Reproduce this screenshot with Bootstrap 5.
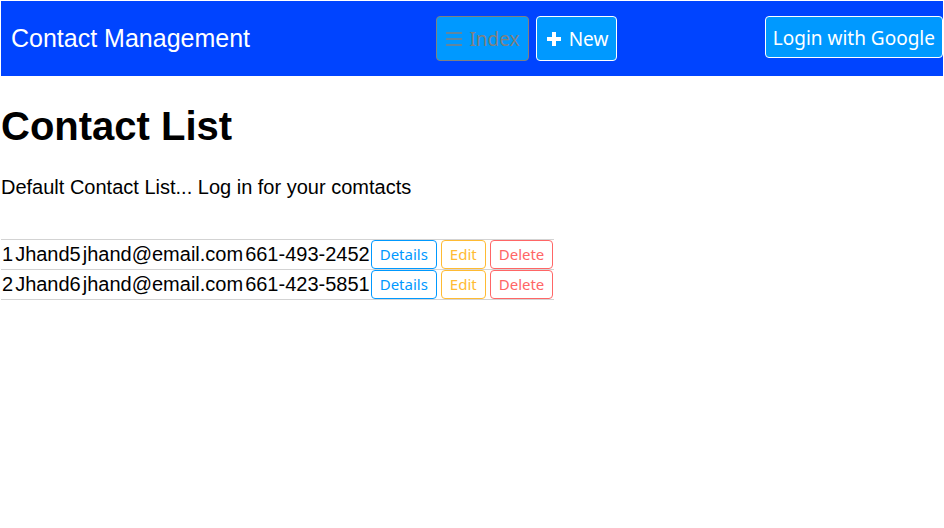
<!DOCTYPE html>
<html lang="en">
<head>
<meta charset="utf-8">
<meta name="viewport" content="width=device-width, initial-scale=1">
<title>Contact Management</title>
<link href="https://cdn.jsdelivr.net/npm/bootstrap@5.3.0/dist/css/bootstrap.min.css" rel="stylesheet">
<style>
body { margin: 1px; background: #fff; color: #000; font: 20px/28px "Liberation Sans", Arial, sans-serif; }
.topbar { background: #04f; min-height: 75px; padding: 15px 0; }
.topbar .navbar-brand { font-size: 25px; line-height: 30px; padding: 7px 10px; margin: 0; color: #fff; }
.menu { gap: 7px; padding-left: 29px; }
.btn { font-family: "Noto Sans", sans-serif; border-radius: 4px; white-space: nowrap; }
.topbar .btn { font-size: 19px; line-height: 24px; padding: 9px 7px 7px; color: #fff; background: #09f; border-color: #fff; }
.topbar .menu .btn { line-height: 27px; display: flex; align-items: center; gap: 6px; padding: 9px 8px 7px; }
.topbar .btn:disabled { color: #808080; border-color: #808080; opacity: 1; }
h1 { font-size: 40px; line-height: 46px; font-weight: 700; margin: 27px 0 24px; }
.intro { margin: 0 0 38px; }
.contacts { border-collapse: collapse; }
.contacts tr { border-top: 1px solid #d3d3d3; border-bottom: 1px solid #d3d3d3; }
.contacts td { padding: 0 1px; line-height: 29px; vertical-align: top; }
.contacts td:last-child { padding-left: 0; }
.contacts .btn { font-size: 15px; line-height: 21px; padding: 3px 8px; background: #fff; }
.actions { gap: 4px; }
.btn-details { color: #09f; border-color: #09f; }
.btn-edit { color: #fb3; border-color: #fb3; }
.btn-delete { color: #f66; border-color: #f66; }
</style>
</head>
<body>
<nav class="topbar navbar d-flex flex-nowrap align-items-start">
  <a class="navbar-brand" href="#">Contact Management</a>
  <div class="menu d-flex mx-auto">
    <button type="button" class="btn" disabled>
      <svg width="18" height="19" viewBox="0 0 18 19" fill="none" stroke="#808080" stroke-width="1.6" aria-hidden="true"><path d="M1 3h16M1 9h16M1 15h16"/></svg>Index</button>
    <button type="button" class="btn">
      <svg width="18" height="19" viewBox="0 0 18 19" fill="currentColor" aria-hidden="true"><path d="M7 2h4v5h5v4h-5v5H7v-5H2V7h5z"/></svg>New</button>
  </div>
  <button type="button" class="btn">Login with Google</button>
</nav>
<main>
  <h1>Contact List</h1>
  <p class="intro">Default Contact List... Log in for your comtacts</p>
  <table class="contacts">
    <tbody>
      <tr><td>1</td><td>Jhand5</td><td>jhand@email.com</td><td>661-493-2452</td>
        <td><div class="actions d-flex"><button type="button" class="btn btn-details">Details</button><button type="button" class="btn btn-edit">Edit</button><button type="button" class="btn btn-delete">Delete</button></div></td></tr>
      <tr><td>2</td><td>Jhand6</td><td>jhand@email.com</td><td>661-423-5851</td>
        <td><div class="actions d-flex"><button type="button" class="btn btn-details">Details</button><button type="button" class="btn btn-edit">Edit</button><button type="button" class="btn btn-delete">Delete</button></div></td></tr>
    </tbody>
  </table>
</main>
<script src="https://cdn.jsdelivr.net/npm/bootstrap@5.3.0/dist/js/bootstrap.bundle.min.js"></script>
</body>
</html>
